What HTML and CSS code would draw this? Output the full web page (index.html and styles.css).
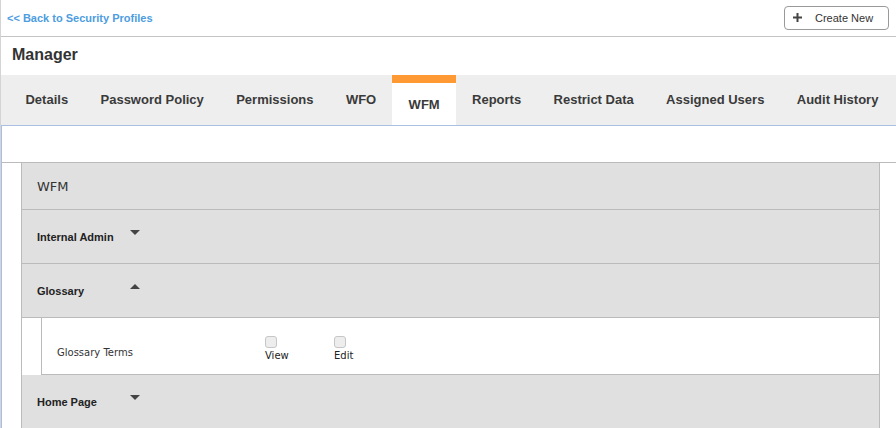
FILE: index.html
```html
<!DOCTYPE html>
<html lang="en">
<head>
    <meta charset="UTF-8">
    <meta name="viewport" content="width=device-width, initial-scale=1.0">
    <title>Security Profile - Manager</title>
    <link rel="stylesheet" href="styles.css">
</head>
<body>
<div class="page">
    <div class="topbar">
        <a class="back-link" href="#">&lt;&lt; Back to Security Profiles</a>
        <button class="create-btn">
            <svg class="plus" width="9" height="9" viewBox="0 0 9 9">
                <rect x="3.5" y="0" width="2" height="9" fill="#444"/>
                <rect x="0" y="3.5" width="9" height="2" fill="#444"/>
            </svg>
            <span>Create New</span>
        </button>
    </div>

    <h1 class="profile-name">Manager</h1>

    <div class="tabs">
        <div class="tab">Details</div>
        <div class="tab">Password Policy</div>
        <div class="tab">Permissions</div>
        <div class="tab">WFO</div>
        <div class="tab active">WFM</div>
        <div class="tab">Reports</div>
        <div class="tab">Restrict Data</div>
        <div class="tab">Assigned Users</div>
        <div class="tab">Audit History</div>
    </div>

    <div class="content">
        <div class="spacer"></div>
        <div class="section">
            <div class="panel">
                <div class="panel-title">WFM</div>

                <div class="group">
                    <span class="group-name">Internal Admin</span>
                    <span class="caret down"></span>
                </div>

                <div class="group">
                    <span class="group-name">Glossary</span>
                    <span class="caret up"></span>
                </div>
                <div class="item">
                    <span class="item-name">Glossary Terms</span>
                    <label class="perm">
                        <input type="checkbox">
                        <span>View</span>
                    </label>
                    <label class="perm">
                        <input type="checkbox">
                        <span>Edit</span>
                    </label>
                </div>

                <div class="group">
                    <span class="group-name">Home Page</span>
                    <span class="caret down"></span>
                </div>
            </div>
        </div>
    </div>
</div>
</body>
</html>
```

FILE: styles.css
```css
* {
    margin: 0;
    padding: 0;
    box-sizing: border-box;
}

body {
    font-family: 'Liberation Sans', Arial, sans-serif;
    background: #fff;
    color: #333;
}

.page {
    border-left: 1px solid #d4d4d4;
    min-height: 100vh;
}

.topbar {
    display: flex;
    justify-content: space-between;
    align-items: center;
    height: 37px;
    padding: 0 7px 1px 6px;
    border-bottom: 1px solid #c4c4c4;
}

.back-link {
    font-size: 11px;
    font-weight: bold;
    color: #4d9de0;
    text-decoration: none;
}

.create-btn {
    display: flex;
    align-items: center;
    height: 24px;
    width: 105px;
    padding-left: 8px;
    background: #fff;
    border: 1px solid #999;
    border-radius: 4px;
    font-family: 'Liberation Sans', Arial, sans-serif;
    font-size: 11px;
    color: #333;
    cursor: pointer;
}

.create-btn .plus {
    margin-right: 13px;
}

.profile-name {
    height: 38px;
    padding-left: 11px;
    font-size: 16px;
    font-weight: bold;
    line-height: 36px;
    color: #333;
}

.tabs {
    display: flex;
    height: 51px;
    padding-left: 8.3px;
    background: #eeeeee;
    border-bottom: 1px solid #a9bfe3;
    overflow: hidden;
}

.tab {
    flex-shrink: 0;
    padding: 0 16.2px;
    font-size: 13px;
    font-weight: bold;
    line-height: 49px;
    white-space: nowrap;
    color: #3a3a3a;
    cursor: pointer;
}

.tab.active {
    background: #fff;
    border-top: 8px solid #ff9933;
    line-height: 43px;
}

.content {
    border-left: 1px solid #a9bfe3;
}

.spacer {
    height: 36px;
}

.section {
    border-top: 1px solid #bbbbbb;
}

.panel {
    margin: 0 16px 0 19px;
    border-left: 1px solid #bbbbbb;
    border-right: 1px solid #bbbbbb;
}

.panel-title {
    height: 47px;
    padding-left: 15px;
    background: #e0e0e0;
    border-bottom: 1px solid #bbbbbb;
    font-family: 'DejaVu Sans', Verdana, sans-serif;
    font-size: 13px;
    line-height: 47px;
    color: #333;
}

.group {
    display: flex;
    align-items: center;
    height: 54px;
    padding-left: 15px;
    background: #e0e0e0;
    border-bottom: 1px solid #bbbbbb;
}

.group-name {
    width: 93px;
    font-size: 11px;
    font-weight: bold;
    color: #222;
}

.caret {
    width: 0;
    height: 0;
    margin-bottom: 8px;
    border-left: 5px solid transparent;
    border-right: 5px solid transparent;
}

.caret.down {
    border-top: 5px solid #444;
}

.caret.up {
    border-bottom: 5px solid #444;
}

.item {
    display: flex;
    align-items: flex-start;
    height: 57px;
    margin-left: 19px;
    padding: 18px 0 0 15px;
    background: #fff;
    border-left: 1px solid #bbbbbb;
    border-bottom: 1px solid #bbbbbb;
    font-family: 'DejaVu Sans', Verdana, sans-serif;
    font-size: 10px;
}

.item-name {
    width: 208px;
    margin-top: 11px;
    color: #333;
}

.perm {
    display: flex;
    flex-direction: column;
    width: 69px;
    color: #222;
}

.perm input {
    appearance: none;
    width: 12px;
    height: 12px;
    margin: 0 0 2px;
    background: #ededed;
    border: 1px solid #c6c6c6;
    border-radius: 3px;
}

.perm span {
    line-height: 12px;
}
```
